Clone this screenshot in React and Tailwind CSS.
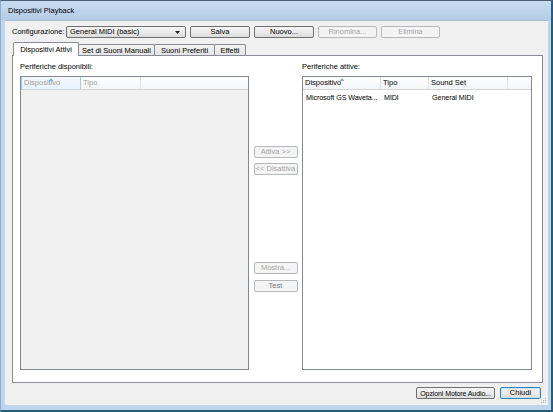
import React from "react";

const FONT = "font-['Liberation_Sans',Arial,sans-serif]";

function Btn({ className = "", disabled, isDefault, children }) {
  let look =
    "border-[#707070] bg-gradient-to-b from-[#f4f4f4] via-[#ebebeb] to-[#dcdcdc] text-black";
  if (disabled) look = "border-[#b5b9bc] bg-[#f4f4f4] text-[#a5a5a5]";
  if (isDefault)
    look =
      "border-[#3c7fb1] bg-gradient-to-b from-[#f2f2f2] via-[#ebebeb] to-[#dcdcdc] text-black shadow-[inset_0_0_0_1px_#c4e5f6]";
  return (
    <div
      className={`h-[12px] flex items-center justify-center border rounded-[2px] text-[7.5px] leading-none whitespace-nowrap ${look} ${className}`}
    >
      {children}
    </div>
  );
}

function SortArrow({ color }) {
  return (
    <svg
      className="absolute left-1/2 top-[1px] -translate-x-1/2"
      width="5"
      height="3"
      viewBox="0 0 5 3"
    >
      <path d="M0 3 L2.5 0 L5 3 Z" fill={color} />
    </svg>
  );
}

function ListBox({ cols, rows, disabled, className }) {
  const headText = disabled ? "text-[#a0a0a0]" : "text-black";
  return (
    <div
      className={`flex flex-col border border-[#828790] ${disabled ? "bg-[#f0f0f0]" : "bg-white"} ${className}`}
    >
      <div className="h-[13px] flex bg-gradient-to-b from-white to-[#f3f4f6] border-b border-[#d5d5d5]">
        {cols.map((c, i) => (
          <div
            key={i}
            className={`relative h-full flex items-center pl-[2px] text-[7.5px] leading-none border-r ${headText} ${c.w} ${
              c.hi
                ? "border-[#a9cdec] border-l bg-gradient-to-b from-[#f4f9fd] to-[#e6f1fa]"
                : "border-[#e0e2e5]"
            }`}
          >
            {c.sort && <SortArrow color={disabled ? "#7fb2e0" : "#9aa6b4"} />}
            {c.label}
          </div>
        ))}
        <div className="flex-1" />
      </div>
      {rows.map((r, ri) => (
        <div key={ri} className="h-[13px] mt-[1px] flex items-center">
          {r.map((t, ci) => (
            <div
              key={ci}
              className={`pl-[3px] text-[7.2px] tracking-[-0.1px] leading-none text-black whitespace-nowrap ${cols[ci].w}`}
            >
              {t}
            </div>
          ))}
        </div>
      ))}
    </div>
  );
}

export default function App() {
  return (
    <div
      className={`${FONT} w-[553px] h-[412px] flex flex-col bg-[#bfd5ee] border-t border-t-[#4b5d70] border-r-2 border-r-[#22607a] border-b-2 border-b-[#22607a] border-l border-l-[#8eadcc] select-none`}
    >
      {/* title bar */}
      <div className="h-[19px] flex items-center pl-[7px] bg-gradient-to-b from-[#cadcf0] to-[#b4cce7] text-[7.5px] text-black leading-none">
        Dispositivi Playback
      </div>

      <div className="flex-1 flex">
        <div className="w-[4px]" />
        {/* client area */}
        <div className="relative w-[543px] flex flex-col bg-[#f0f0f0] border-t border-[#a8bfd8]">
          {/* configuration row */}
          <div className="mt-[5px] pl-[7px] h-[12px] flex items-center">
            <div className="w-[54px] text-[7.5px] leading-none text-black">
              Configurazione:
            </div>
            <div className="w-[120px] h-[12px] flex items-center justify-between px-[3px] border border-[#707070] rounded-[2px] bg-gradient-to-b from-[#f4f4f4] via-[#ebebeb] to-[#dcdcdc] text-[7.5px] leading-none">
              <span>General MIDI (basic)</span>
              <svg width="5" height="3" viewBox="0 0 5 3" className="mr-[2px]">
                <path d="M0 0 L5 0 L2.5 3 Z" fill="#222" />
              </svg>
            </div>
            <Btn className="w-[60px] ml-[4px]">Salva</Btn>
            <Btn className="w-[60px] ml-[4px]">Nuovo...</Btn>
            <Btn className="w-[59px] ml-[4px]" disabled>
              Rinomina...
            </Btn>
            <Btn className="w-[59px] ml-[4px]" disabled>
              Elimina
            </Btn>
          </div>

          {/* tabs */}
          <div className="mt-[4px] ml-[8px] h-[14px] flex items-end">
            <div className="relative z-10 w-[66px] h-[14px] flex items-center justify-center bg-white border border-b-0 border-[#898c95] rounded-t-[2px] text-[7.5px] leading-none">
              Dispositivi Attivi
            </div>
            <div className="w-[77px] h-[12px] -ml-px flex items-center justify-center bg-gradient-to-b from-[#f3f3f3] to-[#e3e3e3] border border-b-0 border-[#898c95] rounded-t-[2px] text-[7.5px] leading-none">
              Set di Suoni Manuali
            </div>
            <div className="w-[61px] h-[12px] -ml-px flex items-center justify-center bg-gradient-to-b from-[#f3f3f3] to-[#e3e3e3] border border-b-0 border-[#898c95] rounded-t-[2px] text-[7.5px] leading-none">
              Suoni Preferiti
            </div>
            <div className="w-[32px] h-[12px] -ml-px flex items-center justify-center bg-gradient-to-b from-[#f3f3f3] to-[#e3e3e3] border border-b-0 border-[#898c95] rounded-t-[2px] text-[7.5px] leading-none">
              Effetti
            </div>
          </div>

          {/* tab panel */}
          <div className="relative -mt-px ml-[7px] w-[531px] h-[328px] flex bg-white border border-[#898c95]">
            <div className="ml-[7px] w-[229px] flex flex-col">
              <div className="mt-[6px] h-[10px] flex items-center text-[7.5px] leading-none">
                Periferiche disponibili:
              </div>
              <ListBox
                disabled
                className="mt-[4px] h-[294px]"
                cols={[
                  { label: "Dispositivo", w: "w-[60px]", sort: true, hi: true },
                  { label: "Tipo", w: "w-[60px]" },
                ]}
                rows={[]}
              />
            </div>

            <div className="w-[53px] flex flex-col items-center pt-[90px]">
              <Btn className="w-[44px]" disabled>
                Attiva &gt;&gt;
              </Btn>
              <Btn className="w-[44px] mt-[5px]" disabled>
                &lt;&lt; Disattiva
              </Btn>
              <Btn className="w-[44px] mt-[87px]" disabled>
                Mostra...
              </Btn>
              <Btn className="w-[44px] mt-[6px] !text-[#7a7a7a]" disabled>
                Test
              </Btn>
            </div>

            <div className="w-[230px] flex flex-col">
              <div className="mt-[6px] h-[10px] flex items-center text-[7.5px] leading-none">
                Periferiche attive:
              </div>
              <ListBox
                className="mt-[4px] h-[294px]"
                cols={[
                  { label: "Dispositivo", w: "w-[78px]", sort: true },
                  { label: "Tipo", w: "w-[48px]" },
                  { label: "Sound Set", w: "w-[79px]" },
                ]}
                rows={[["Microsoft GS Waveta...", "MIDI", "General MIDI"]]}
              />
            </div>
          </div>

          {/* bottom buttons */}
          <div className="mt-[4px] h-[12px] flex justify-end pr-[7px]">
            <Btn className="w-[79px] !text-[7px] tracking-[-0.1px]">
              Opzioni Motore Audio...
            </Btn>
            <Btn className="w-[41px] ml-[5px]" isDefault>
              Chiudi
            </Btn>
          </div>

          {/* size grip */}
          <svg
            className="absolute right-[1px] bottom-[1px]"
            width="8"
            height="8"
            viewBox="0 0 8 8"
          >
            <rect x="6" y="2" width="1" height="1" fill="#b8b8b8" />
            <rect x="4" y="4" width="1" height="1" fill="#b8b8b8" />
            <rect x="6" y="4" width="1" height="1" fill="#b8b8b8" />
            <rect x="2" y="6" width="1" height="1" fill="#b8b8b8" />
            <rect x="4" y="6" width="1" height="1" fill="#b8b8b8" />
            <rect x="6" y="6" width="1" height="1" fill="#b8b8b8" />
          </svg>
        </div>
        <div className="w-[3px]" />
      </div>
      <div className="h-[5px]" />
    </div>
  );
}
